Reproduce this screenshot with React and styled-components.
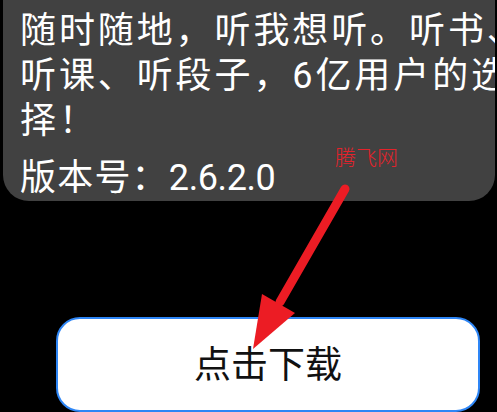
import React from 'react';
import styled, { createGlobalStyle } from 'styled-components';

const GlobalStyle = createGlobalStyle`
  html, body {
    margin: 0;
    padding: 0;
    background: #000;
    overflow: hidden;
  }
  body {
    font-family: Roboto, "Noto Sans CJK SC", sans-serif;
  }
`;

const Screen = styled.div`
  position: relative;
  width: 497px;
  height: 412px;
  overflow: hidden;
  display: flex;
  flex-direction: column;
`;

const InfoPanel = styled.div`
  height: 206px;
  box-sizing: border-box;
  margin: 0 2px 0 3px;
  padding: 9px 0 0 17px;
  background: #414141;
  border-radius: 0 0 26px 26px;
  color: #fff;
  overflow: hidden;
`;

const DescLine = styled.div`
  font-size: 36px;
  line-height: 45px;
  letter-spacing: ${(p) => p.$spacing ?? 2.9}px;
  white-space: nowrap;
  margin-top: ${(p) => p.$gap || 0}px;
`;

const Digits = styled.span`
  letter-spacing: -0.4px;
`;

const DownloadButton = styled.button`
  margin: 116px 0 0 56px;
  width: 424px;
  height: 98px;
  box-sizing: border-box;
  padding: 0 0 4px;
  background: #fff;
  border: 2px solid #2e86f6;
  border-radius: 24px;
  font-family: Roboto, "Noto Sans CJK SC", sans-serif;
  font-size: 37px;
  color: #111;
  display: flex;
  align-items: center;
  justify-content: center;
`;

const Watermark = styled.span`
  position: absolute;
  left: 335px;
  top: 146px;
  font-family: "Noto Sans CJK SC", sans-serif;
  font-size: 21px;
  line-height: 1;
  font-weight: 300;
  color: #e3232b;
`;

const ArrowLayer = styled.svg`
  position: absolute;
  left: 0;
  top: 0;
  pointer-events: none;
`;

function Arrow() {
  return (
    <ArrowLayer width="497" height="412" viewBox="0 0 497 412">
      <line x1="345" y1="189" x2="280" y2="302" stroke="#ec1c24" strokeWidth="9" strokeLinecap="round" />
      <polygon points="262,294 295,313 253,349" fill="#ec1c24" />
    </ArrowLayer>
  );
}

export default function App() {
  return (
    <Screen>
      <GlobalStyle />
      <InfoPanel>
        <DescLine>随时随地，听我想听。听书、</DescLine>
        <DescLine>听课、听段子，6亿用户的选</DescLine>
        <DescLine>择！</DescLine>
        <DescLine $gap={12} $spacing={1.2}>
          版本号：<Digits>2.6.2.0</Digits>
        </DescLine>
      </InfoPanel>
      <DownloadButton type="button">点击下载</DownloadButton>
      <Watermark>腾飞网</Watermark>
      <Arrow />
    </Screen>
  );
}
